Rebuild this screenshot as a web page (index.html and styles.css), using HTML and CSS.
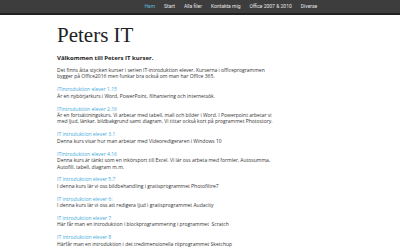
FILE: index.html
```html
<!DOCTYPE html>
<html lang="sv">
<head>
	<meta charset="UTF-8">
	<title>Peters IT</title>
	<link rel="stylesheet" href="styles.css">
</head>
<body>
	<div class="topnav">
		<ul class="menu">
			<li class="active"><a href="#">Hem</a></li>
			<li><a href="#">Start</a></li>
			<li><a href="#">Alla filer</a></li>
			<li><a href="#">Kontakta mig</a></li>
			<li><a href="#">Office 2007 &amp; 2010</a></li>
			<li><a href="#">Diverse</a></li>
		</ul>
	</div>

	<div class="content">
		<h1>Peters IT</h1>
		<h2>Välkommen till Peters IT kurser.</h2>

		<p>Det finns åtta stycken kurser i serien IT-introduktion elever. Kurserna i officeprogrammen bygger på Office2016 men funkar bra också om man har Office 365.</p>

		<p><a href="#">ITintroduktion elever 1.15</a><br>
		Är en nybörjarkurs i Word, PowerPoint, filhantering och internetsök.</p>

		<p><a href="#">ITintroduktion elever 2.16</a><br>
		Är en fortsättningskurs. Vi arbetar med tabell, mall och bilder i Word. I Powerpoint arbetar vi med ljud, länkar, bildbakgrund samt diagram. Vi tittar också kort på programmet Photostory.</p>

		<p><a href="#">IT introduktion elever 3.1</a><br>
		Denna kurs visar hur man arbetar med Videoredigeraren i Windows 10</p>

		<p><a href="#">ITintroduktion elever 4.16</a><br>
		Denna kurs är tänkt som en inkörsport till Excel. Vi lär oss arbeta med formler, Autosumma, Autofill, tabell, diagram m.m.</p>

		<p><a href="#">IT introduktion elever 5.7</a><br>
		I denna kurs lär vi oss bildbehandling i gratisprogrammet Photofiltre7</p>

		<p><a href="#">IT introduktion elever 6:</a><br>
		I denna kurs lär vi oss att redigera ljud i gratisprogrammet Audacity</p>

		<p><a href="#">IT introduktion elever 7</a><br>
		Här får man en introduktion i blockprogrammering i programmet&nbsp; Scratch</p>

		<p><a href="#">IT introduktion elever 8</a><br>
		Härfår man en introduktion i det tredimensionella ritprogrammet Sketchup</p>
	</div>
</body>
</html>
```

FILE: styles.css
```css
body{
	margin: 0;
	background: #fff;
	color: #333;
	font-family: "Open Sans", "Liberation Sans", sans-serif;
}

.topnav{
	height: 13px;
	background: #3d3d3d;
	border-bottom: 2px solid #222;
}

ul.menu{
	display: flex;
	margin: 0;
	padding: 0 0 0 140px;
	list-style: none;
	font-family: Roboto, "Liberation Sans", sans-serif;
}

ul.menu li a{
	display: block;
	padding: 0 4.5px;
	line-height: 13px;
	font-size: 5px;
	color: #e6e6e6;
	text-decoration: none;
}

ul.menu li.active a{
	color: #5fb6d6;
}

.content{
	width: 223px;
	padding-left: 57px;
}

.content h1{
	margin: 8px 0 0 0;
	font-family: "Liberation Serif", serif;
	font-weight: normal;
	font-size: 21px;
	line-height: 24px;
	color: #222;
}

.content h2{
	margin: 7px 0 0 0;
	font-size: 6px;
	line-height: 8px;
	font-weight: bold;
	color: #222;
}

.content p{
	margin: 5px 0 6.43px 0;
	font-size: 5px;
	line-height: 6.43px;
}

.content p + p{
	margin-top: 0;
}

.content a{
	color: #3fa9db;
	text-decoration: none;
}
```
